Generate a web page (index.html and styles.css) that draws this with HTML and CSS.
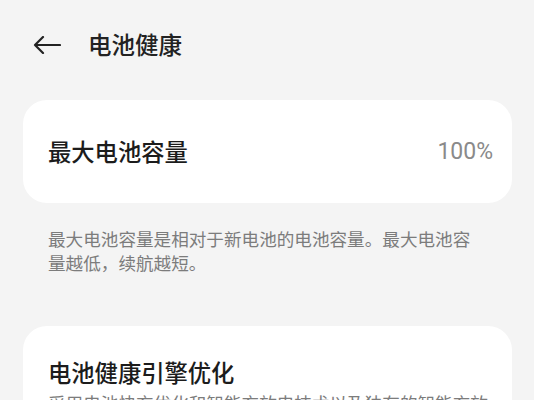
FILE: index.html
```html
<!DOCTYPE html>
<html lang="zh-CN">
<head>
<meta charset="utf-8">
<link rel="stylesheet" href="styles.css">
</head>
<body>
<div class="page">
  <header class="header">
    <svg class="back" width="28" height="18" viewBox="0 0 28 18" aria-hidden="true">
      <path d="M27 9H2M10 1L2 9l8 8" fill="none" stroke="#222" stroke-width="2.2" stroke-linecap="round" stroke-linejoin="round"/>
    </svg>
    <h1 class="title">电池健康</h1>
  </header>

  <section class="card row-card">
    <span class="label">最大电池容量</span>
    <span class="value">100%</span>
  </section>

  <p class="desc">最大电池容量是相对于新电池的电池容量。最大电池容量越低，续航越短。</p>

  <section class="card block-card">
    <h2 class="label">电池健康引擎优化</h2>
    <p class="sub">采用电池快充优化和智能充放电技术以及独有的智能充放算法，延长电池寿命。</p>
  </section>
</div>
</body>
</html>
```

FILE: styles.css
```css
* { box-sizing: border-box; }
html, body {
  margin: 0;
  padding: 0;
  background: #f4f4f4;
  font-family: "Noto Sans CJK SC", "Noto Sans", sans-serif;
}
.page {
  width: 534px;
  height: 400px;
  overflow: hidden;
}
.header {
  height: 90px;
  display: flex;
  align-items: center;
  padding-left: 33px;
}
.back {
  display: block;
  margin-right: 27px;
}
.title {
  margin: 0;
  font-size: 23.5px;
  font-weight: 500;
  color: #222;
  line-height: 1;
}
.card {
  background: #fff;
  margin: 10px 22px 0 23px;
  border-radius: 24px;
}
.row-card {
  height: 103px;
  display: flex;
  align-items: center;
  justify-content: space-between;
  padding: 0 19px 0 25px;
}
.label {
  margin: 0;
  font-size: 23.3px;
  font-weight: 500;
  color: #1c1c1c;
  line-height: 1.3;
}
.value {
  font-size: 23px;
  color: #8a8a8a;
  font-family: "Roboto", "Noto Sans", sans-serif;
}
.desc {
  margin: 0;
  padding: 24px 56px 0 48px;
  font-size: 17.6px;
  line-height: 24px;
  color: #7c7c7c;
}
.block-card {
  margin-top: 51px;
  padding: 31px 20px 20px 25px;
}
.sub {
  margin: 4px 0 0;
  font-size: 17.6px;
  line-height: 24px;
  color: #7c7c7c;
}
```
